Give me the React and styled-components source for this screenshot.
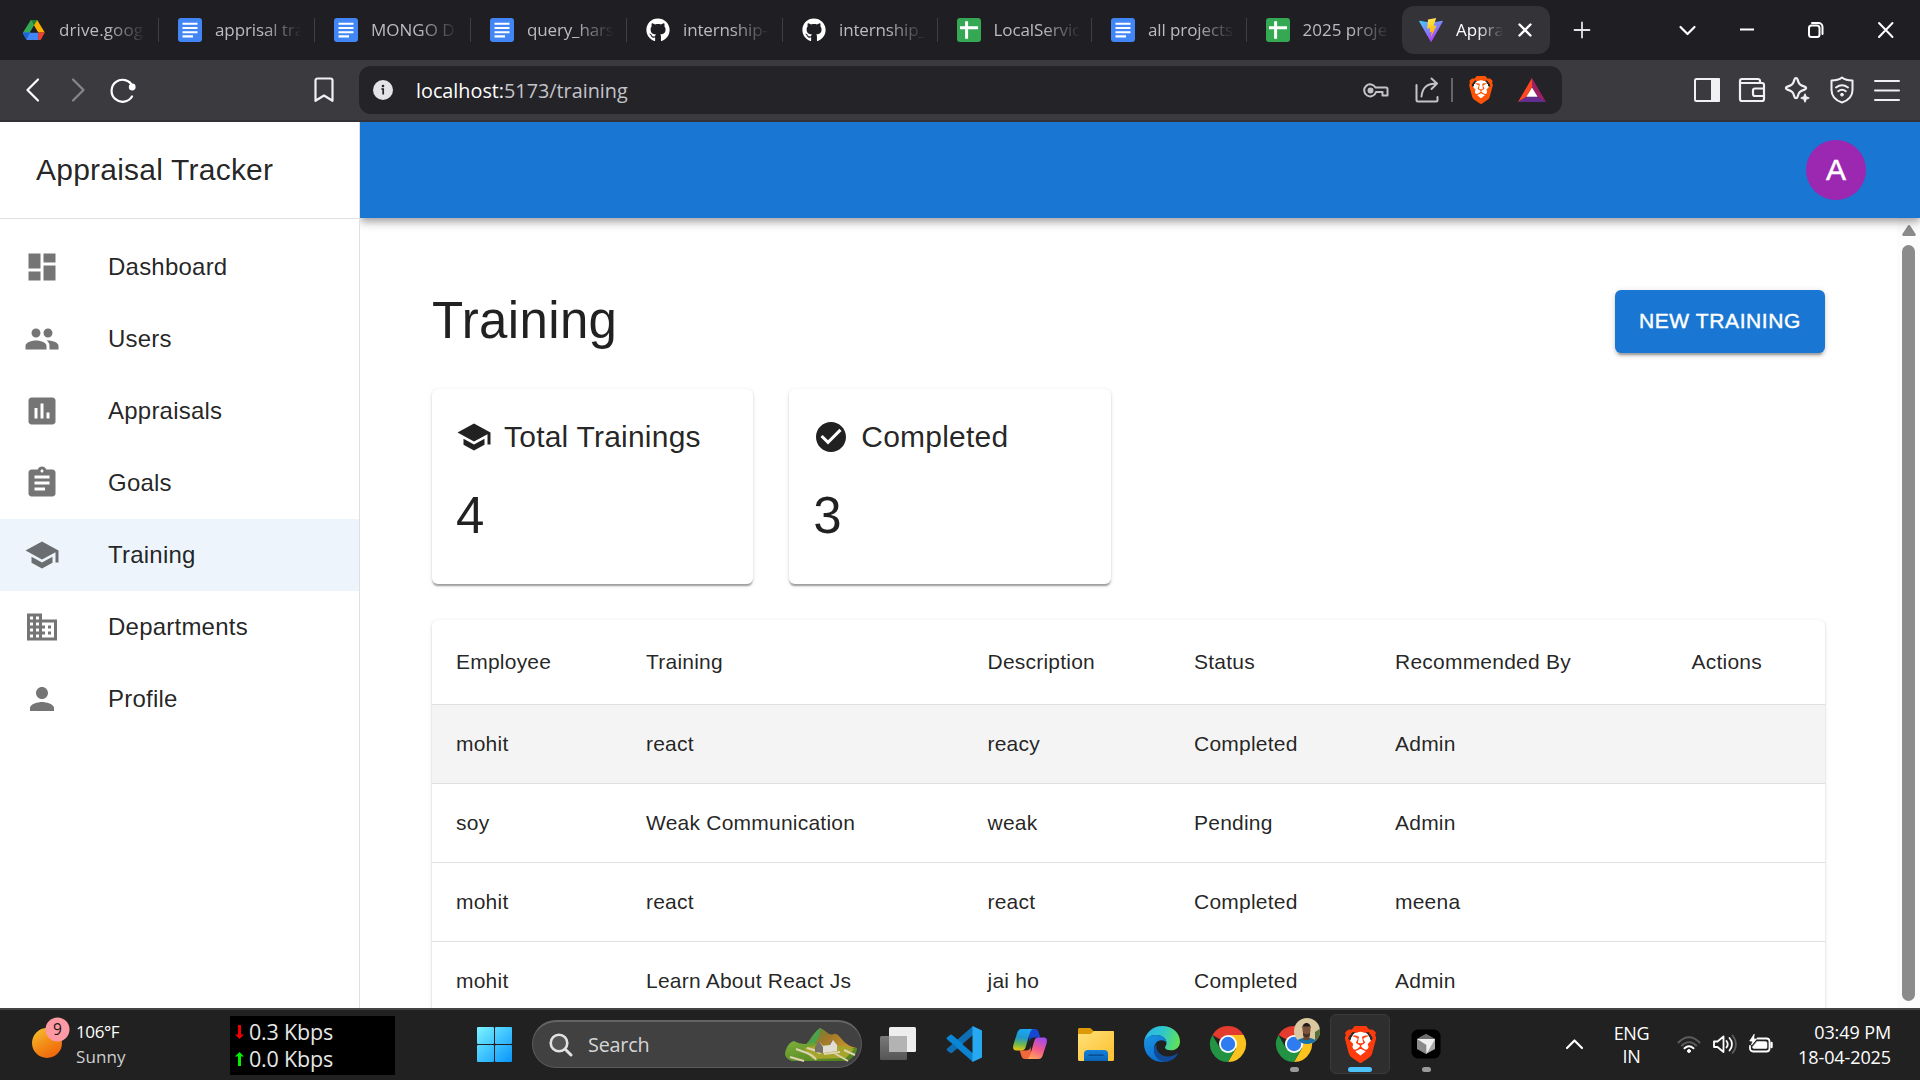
import React from 'react';
import styled, { createGlobalStyle, css } from 'styled-components';
import {
  MdDashboard,
  MdPeople,
  MdAssessment,
  MdAssignment,
  MdSchool,
  MdBusiness,
  MdPerson,
  MdCheckCircle,
} from 'react-icons/md';
import { SiBrave } from 'react-icons/si';
import { FaGithub } from 'react-icons/fa';

const GlobalStyle = createGlobalStyle`
  *, *::before, *::after { box-sizing: border-box; }
  html, body { margin: 0; padding: 0; overflow: hidden; }
  body { font-family: "Liberation Sans", Arial, sans-serif; background: #fff; }
  svg { display: block; flex: none; }
`;

const systemFont = css`
  font-family: "Open Sans", "Noto Sans", sans-serif;
`;

const Screen = styled.div`
  width: 1920px;
  height: 1080px;
  display: flex;
  flex-direction: column;
  overflow: hidden;
`;

/* ---------- Browser chrome ---------- */

const TabStrip = styled.div`
  ${systemFont}
  height: 60px;
  flex: none;
  display: flex;
  align-items: center;
  padding-left: 3px;
  background: #1f1e23;
  color: #fff;
`;

const Tab = styled.div`
  width: ${(p) => p.$width}px;
  height: 24px;
  flex: none;
  display: flex;
  align-items: center;
  gap: 13px;
  padding-left: 19px;
  border-right: 1px solid ${(p) => (p.$last ? 'transparent' : '#403f45')};
`;

const ActiveTab = styled.div`
  width: 148px;
  height: 48px;
  flex: none;
  display: flex;
  align-items: center;
  padding-left: 17px;
  border-radius: 12px;
  background: #343338;
`;

const TabTitle = styled.span`
  width: ${(p) => (p.$active ? 47 : 87)}px;
  white-space: nowrap;
  font-size: 17px;
  line-height: 24px;
  letter-spacing: ${(p) => p.$spacing || 0}px;
  color: ${(p) => (p.$active ? '#fff' : '#bcbbc0')};
  mask-image: linear-gradient(to right, #000 ${(p) => (p.$active ? 45 : 56)}%, transparent 100%);
`;

const ActiveTabTitle = styled(TabTitle)`
  margin: 0 14px 0 13px;
`;

const NewTab = styled.div`
  margin-left: 23px;
`;

const WindowControls = styled.div`
  flex: 1;
  display: flex;
  align-items: center;
  justify-content: flex-end;
  gap: 45px;
  padding-right: 22px;
`;

const TabSearch = styled.div`
  margin-right: -9px;
`;

const Toolbar = styled.div`
  ${systemFont}
  height: 62px;
  flex: none;
  display: flex;
  align-items: flex-start;
  padding-top: 6px;
  background: #3b3a3f;
  border-bottom: 2px solid #323136;
`;

const NavButtons = styled.div`
  width: 359px;
  height: 48px;
  display: flex;
  align-items: center;
  padding: 0 23px 0 24px;
`;

const NavSpacer = styled.div`
  width: ${(p) => p.$width}px;
  flex: none;
`;

const AddressBar = styled.div`
  width: 1203px;
  height: 48px;
  display: flex;
  align-items: center;
  padding: 0 16px 0 14px;
  border-radius: 12px;
  background: #242328;
`;

const Url = styled.div`
  flex: 1;
  margin-left: 23px;
  padding-top: 2px;
  font-size: 19.8px;
  line-height: 30px;
  color: #c3c3c8;
  white-space: nowrap;
`;

const Host = styled.span`
  color: #fff;
`;

const AddressActions = styled.div`
  display: flex;
  align-items: center;
`;

const ActionDivider = styled.div`
  width: 2px;
  height: 24px;
  margin: 0 14px 0 12px;
  background: #66656a;
`;

const ToolbarRight = styled.div`
  flex: 1;
  height: 48px;
  display: flex;
  align-items: center;
  justify-content: flex-end;
  gap: 17px;
  padding-right: 19px;
`;

/* ---------- Application ---------- */

const AppArea = styled.div`
  height: 886px;
  flex: none;
  display: flex;
  overflow: hidden;
  background: #fff;
  color: rgba(0, 0, 0, 0.87);
`;

const Sidebar = styled.nav`
  position: relative;
  z-index: 2;
  width: 360px;
  flex: none;
  background: #fff;
  border-right: 1px solid #e0e0e0;
`;

const Brand = styled.div`
  height: 97px;
  display: flex;
  align-items: center;
  padding: 0 36px;
  border-bottom: 1px solid #e0e0e0;
  font-size: 30px;
  line-height: 48px;
  letter-spacing: 0.225px;
  white-space: nowrap;
`;

const MenuList = styled.ul`
  list-style: none;
  margin: 0;
  padding: 12px 0;
`;

const MenuItem = styled.li`
  height: 72px;
  display: flex;
  align-items: center;
  padding: 0 24px;
  gap: 48px;
  background: ${(p) => (p.$selected ? '#edf4fc' : 'transparent')};
  font-size: 24px;
  line-height: 36px;
  letter-spacing: 0.225px;

  svg {
    width: 36px;
    height: 36px;
    color: ${(p) => (p.$selected ? '#6b6e71' : '#757575')};
  }
`;

const Main = styled.div`
  flex: 1;
  min-width: 0;
  display: flex;
  flex-direction: column;
`;

const AppBar = styled.header`
  position: relative;
  z-index: 1;
  height: 96px;
  flex: none;
  display: flex;
  align-items: center;
  justify-content: flex-end;
  padding-right: 54px;
  background: #1976d2;
  box-shadow: 0 3px 6px -1.5px rgba(0, 0, 0, 0.2), 0 6px 7.5px rgba(0, 0, 0, 0.14),
    0 1.5px 15px rgba(0, 0, 0, 0.12);
`;

const Avatar = styled.div`
  width: 60px;
  height: 60px;
  border-radius: 50%;
  display: flex;
  align-items: center;
  justify-content: center;
  background: #9c27b0;
  color: #fff;
  font-size: 30px;
  line-height: 30px;
  -webkit-text-stroke: 0.5px #fff;
`;

const ScrollArea = styled.div`
  flex: 1;
  min-height: 0;
  display: flex;
  overflow: hidden;
`;

const Content = styled.main`
  flex: 1;
  min-width: 0;
  padding: 72px 72px 0;
`;

const ScrollTrack = styled.div`
  width: 23px;
  flex: none;
  display: flex;
  flex-direction: column;
  align-items: center;
  padding: 7px 0 7px;
  gap: 9px;
  background: #fcfcfc;
`;

const ScrollThumb = styled.div`
  width: 13px;
  flex: 1;
  border-radius: 7px;
  background: #8b8b8b;
`;

const PageHeader = styled.div`
  height: 63px;
  display: flex;
  align-items: center;
  justify-content: space-between;
  margin-bottom: 36px;
`;

const PageTitle = styled.h1`
  margin: 0;
  padding-bottom: 2px;
  font-size: 51px;
  line-height: 61px;
  font-weight: 400;
  letter-spacing: 0.375px;
`;

const PrimaryButton = styled.button`
  width: 210px;
  height: 63px;
  padding: 0 0 2px;
  border: 0;
  border-radius: 6px;
  background: #1976d2;
  color: #fff;
  font-family: inherit;
  font-size: 21px;
  font-weight: 500;
  line-height: 36px;
  letter-spacing: 0.6px;
  white-space: nowrap;
  -webkit-text-stroke: 0.45px #fff;
  box-shadow: 0 4.5px 1.5px -3px rgba(0, 0, 0, 0.2), 0 3px 3px rgba(0, 0, 0, 0.14),
    0 1.5px 7.5px rgba(0, 0, 0, 0.12);
`;

const cardSurface = css`
  border-radius: 6px;
  background: #fff;
  box-shadow: 0 3px 1.5px -1.5px rgba(0, 0, 0, 0.2), 0 1.5px 1.5px rgba(0, 0, 0, 0.14),
    0 1.5px 4.5px rgba(0, 0, 0, 0.12);
`;

const StatGrid = styled.div`
  display: grid;
  grid-template-columns: repeat(4, 1fr);
  gap: 36px;
  margin-bottom: 36px;
`;

const StatCard = styled.section`
  ${cardSurface}
  height: 195px;
  padding: 24px;
`;

const StatLabel = styled.div`
  height: 48px;
  display: flex;
  align-items: center;
  gap: 12px;
  margin-bottom: 23px;
  font-size: 30px;
  line-height: 48px;
  letter-spacing: 0.225px;
  white-space: nowrap;

  svg {
    width: 36px;
    height: 36px;
  }
`;

const StatValue = styled.div`
  font-size: 51px;
  line-height: 63px;
  letter-spacing: 0.375px;
`;

const TablePaper = styled.div`
  ${cardSurface}
  overflow: hidden;
`;

const TableRow = styled.div`
  height: ${(p) => (p.$head ? 85 : 79)}px;
  display: grid;
  grid-template-columns: 190px 341.5px 206.5px 201px 296.5px 1fr;
  align-items: center;
  border-bottom: 1px solid #e0e0e0;
  background: ${(p) => (p.$hovered ? '#f4f4f4' : 'transparent')};
  font-size: 21px;
  letter-spacing: 0.225px;
`;

const Cell = styled.div`
  padding-left: 24px;
  line-height: 30px;
  white-space: nowrap;
`;

/* ---------- Taskbar ---------- */

const Taskbar = styled.footer`
  ${systemFont}
  height: 72px;
  flex: none;
  display: flex;
  align-items: flex-start;
  background: #212121;
  border-top: 2px solid #454545;
  color: #fff;
`;

const Weather = styled.div`
  width: 230px;
  height: 70px;
  display: flex;
  padding: 6px 0 0 31px;
  gap: 5px;
`;

const WeatherText = styled.div`
  padding-top: 4px;
  font-size: 17px;
  line-height: 24.5px;
  letter-spacing: -0.4px;
`;

const Muted = styled.div`
  color: #cfcfcf;
  letter-spacing: 0.1px;
`;

const NetMeter = styled.div`
  width: 165px;
  height: 59px;
  margin-top: 6px;
  padding: 2px 0 0 5px;
  background: #000;
  color: #e6e6e6;
  font-size: 21.5px;
  line-height: 27px;
  letter-spacing: -0.2px;
`;

const NetLine = styled.div`
  height: 27px;
  display: flex;
  align-items: center;
  gap: 5px;
  white-space: nowrap;
`;

const Dock = styled.div`
  display: flex;
  gap: 6px;
  margin-left: 69px;
  padding-top: 4px;
`;

const DockSlot = styled.div`
  width: 60px;
  height: 60px;
  display: flex;
  flex-direction: column;
  align-items: center;
  justify-content: space-between;
  padding: 11px 0 1px;
  border-radius: 6px;
  border: 1px solid ${(p) => (p.$active ? '#3a3a3a' : 'transparent')};
  background: ${(p) => (p.$active ? '#2e2e2e' : 'transparent')};
`;

const StartSlot = styled(DockSlot)`
  padding-top: 12px;
`;

const Indicator = styled.div`
  width: ${(p) => (p.$active ? 24 : 9)}px;
  height: 5px;
  border-radius: 3px;
  background: ${(p) => (p.$active ? '#4cc2ff' : '#9a9a9a')};
`;

const SearchBox = styled.div`
  width: 330px;
  height: 48px;
  margin: 6px 0 0 2px;
  display: flex;
  align-items: center;
  padding: 0 3px 0 16px;
  border-radius: 24px;
  border: 1px solid #5a5a5a;
  border-top: 2px solid #646464;
  background: #414141;
`;

const SearchLabel = styled.div`
  flex: 1;
  margin-left: 15px;
  font-size: 19.8px;
  line-height: 28px;
  letter-spacing: -0.2px;
  color: #d6d6d6;
`;

const Tray = styled.div`
  flex: 1;
  height: 70px;
  display: flex;
  justify-content: flex-end;
  align-items: flex-start;
  padding-right: 29px;
  white-space: nowrap;
`;

const TrayText = styled.div`
  padding-top: ${(p) => (p.$clock ? 10 : 12)}px;
  width: ${(p) => p.$width}px;
  text-align: ${(p) => (p.$clock ? 'right' : 'center')};
  font-size: 18px;
  line-height: ${(p) => (p.$clock ? 24.5 : 23)}px;
  letter-spacing: ${(p) => (p.$clock ? -0.1 : -0.3)}px;
`;

const TrayIcons = styled.div`
  height: 68px;
  display: flex;
  align-items: center;
  gap: 12px;
  margin-left: ${(p) => p.$left || 0}px;
`;

/* ---------- Icons ---------- */

const Stroke = ({ w, h, vb, color = '#f1f1f4', sw = 2, children }) => (
  <svg
    width={w}
    height={h}
    viewBox={vb || `0 0 ${w} ${h}`}
    fill="none"
    stroke={color}
    strokeWidth={sw}
    strokeLinecap="round"
    strokeLinejoin="round"
  >
    {children}
  </svg>
);

const DriveIcon = () => (
  <svg width="24" height="24" viewBox="0 0 24 24">
    <path d="M8.8 2h6.4L8 14.2 4.6 20.6 1 14.6z" fill="#34a853" />
    <path d="M8.8 2h6.4l7.6 12.6h-6.6z" fill="#fbaf00" />
    <path d="M8.8 2h6.4L12 7.6z" fill="#188038" />
    <path d="M7.8 14.6h8.6v7.4H5.6c-.8 0-1.3-.4-1.6-.9L1 15.4l-.1-.8z" fill="#4285f4" />
    <path d="M1 14.6h7L4.4 21.4z" fill="#1a66d6" />
    <path d="M16.2 14.6h6.6l-3.4 6.2c-.3.8-1 1.2-1.8 1.2h-1.4z" fill="#ea4335" />
    <path d="M12 8l3.9 6.6H8.1z" fill="#1f1e23" />
  </svg>
);

const DocsIcon = () => (
  <svg width="24" height="24" viewBox="0 0 24 24">
    <rect width="24" height="24" rx="3" fill="#4285f4" />
    <path d="M4.5 5.7h15M4.5 10h15M4.5 14.3h15M4.5 18.4h10.5" stroke="#fff" strokeWidth="2.1" />
  </svg>
);

const SheetsIcon = () => (
  <svg width="24" height="24" viewBox="0 0 24 24">
    <rect width="24" height="24" rx="3" fill="#34a853" />
    <path d="M3 9.7h18M9.6 3.2v17.6" stroke="#fff" strokeWidth="3" />
  </svg>
);

const ViteIcon = () => (
  <svg width="24" height="24" viewBox="0 0 24 24">
    <defs>
      <linearGradient id="viteBody" x1="0" y1="0" x2="0.6" y2="1">
        <stop offset="0" stopColor="#41d1ff" />
        <stop offset="1" stopColor="#bd34fe" />
      </linearGradient>
      <linearGradient id="viteBolt" x1="0" y1="0" x2="0.2" y2="1">
        <stop offset="0" stopColor="#ffea83" />
        <stop offset="0.3" stopColor="#ffdd35" />
        <stop offset="1" stopColor="#ffa800" />
      </linearGradient>
    </defs>
    <path d="M23.8 3.6L12.6 23.6a.6.6 0 01-1 0L.2 3.6c-.3-.5.1-1 .7-.9l11.1 2 11.2-2c.5-.1.9.4.6.9z" fill="url(#viteBody)" />
    <path d="M17.2 0L9 1.6L8.2 10.7L11.3 10.2L10.6 14.2L12.800 13.800L11.700 19.500L17.700 7.600L14.600 8.100L17.200 0z" fill="url(#viteBolt)" />
  </svg>
);

const InfoIcon = () => (
  <svg width="20" height="20" viewBox="0 0 20 20">
    <circle cx="10" cy="10" r="10" fill="#e4e3e8" />
    <circle cx="10" cy="6" r="1.3" fill="#242328" />
    <path d="M8.300 9h1.900v5.500" stroke="#242328" strokeWidth="1.700" fill="none" />
  </svg>
);

const BatIcon = () => (
  <svg width="28" height="24" viewBox="0 0 28 24">
    <path d="M14 0L0 24l8.600-5.200L14 9z" fill="#ff4724" />
    <path d="M14 0l14 24-8.600-5.200L14 9z" fill="#9e1f63" />
    <path d="M0 24h28l-8.600-5.500H8.600z" fill="#662d91" />
    <path d="M14 9.500l5.600 9.300H8.400z" fill="#fff" />
  </svg>
);

const BraveHolder = styled.span`
  display: flex;
  justify-content: center;
  align-items: center;
  width: ${(p) => p.$size}px;
  height: ${(p) => p.$size}px;
  background: radial-gradient(ellipse 29% 35% at 50% 48%, #fff 96%, transparent 100%);
  color: ${(p) => p.$color};
`;

const BraveIcon = ({ size, color }) => (
  <BraveHolder $size={size} $color={color}>
    <SiBrave size={size} />
  </BraveHolder>
);

const SunIcon = () => (
  <svg width="40" height="50" viewBox="0 0 40 50">
    <defs>
      <linearGradient id="sun" x1="0.1" y1="0" x2="0.7" y2="1">
        <stop offset="0" stopColor="#f6c02e" />
        <stop offset="0.55" stopColor="#f28a16" />
        <stop offset="1" stopColor="#f0640c" />
      </linearGradient>
    </defs>
    <circle cx="16" cy="27" r="15" fill="url(#sun)" />
    <circle cx="26.500" cy="13.500" r="12" fill="#ff99a4" />
    <text x="26.500" y="19" textAnchor="middle" fontSize="15.500" fontFamily="Open Sans, sans-serif" fill="#161616">9</text>
  </svg>
);

const NetArrow = ({ up }) => (
  <svg width="9" height="16" viewBox="0 0 9 16">
    <path
      d={up ? 'M4.500 1L9 5.500H6V15H3V5.500H0z' : 'M4.500 15L9 10.500H6V1H3v9.500H0z'}
      fill={up ? '#00f000' : '#f00000'}
    />
  </svg>
);

const WindowsIcon = () => (
  <svg width="35" height="35" viewBox="0 0 35 35">
    <defs>
      <linearGradient id="win" x1="0" y1="0" x2="35" y2="35" gradientUnits="userSpaceOnUse">
        <stop offset="0" stopColor="#7df4ff" />
        <stop offset="0.5" stopColor="#3fc4ff" />
        <stop offset="1" stopColor="#0a94f8" />
      </linearGradient>
    </defs>
    <g fill="url(#win)">
      <rect width="17" height="17" rx="1" />
      <rect x="18" width="17" height="17" rx="1" />
      <rect y="18" width="17" height="17" rx="1" />
      <rect x="18" y="18" width="17" height="17" rx="1" />
    </g>
  </svg>
);

const LandscapeIcon = () => (
  <svg width="74" height="36" viewBox="0 0 74 36">
    <defs>
      <linearGradient id="hillA" x1="0" y1="0" x2="1" y2="1">
        <stop offset="0" stopColor="#7cb03a" />
        <stop offset="1" stopColor="#4c7a1c" />
      </linearGradient>
      <linearGradient id="hillB" x1="0" y1="0" x2="1" y2="0.6">
        <stop offset="0" stopColor="#3f9440" />
        <stop offset="0.5" stopColor="#a0782a" />
        <stop offset="1" stopColor="#d09a2c" />
      </linearGradient>
    </defs>
    <path d="M17 20C25 18 27 7 36 1c6 2 8 8 14 6 6-2 8 12 23 14l-6 8H20z" fill="url(#hillB)" />
    <path d="M17 21c9-3 11-14 19-20 1 7-3 13-9 20z" fill="#48a44c" />
    <path d="M1 26c2-8 5-11 9-12 5 3 12 4 20 2l14 4 29 1c0 6-5 11-10 13H8c-5-2-7-4-7-8z" fill="url(#hillA)" />
    <path d="M20 21c12-4 38-4 50 1l-8 9-34 1z" fill="#a5a52c" />
    <path d="M12 22c9 3 18 6 20 11M23 21c7 2 12 3 13 6M40 27l16-2M50 26l14 8M60 23l11 5M6 30l14 4" stroke="#ded2b0" strokeWidth="2" fill="none" />
    <path d="M31 25v-5l4-6 4 6v6zM45 18l3-5 3 5z" fill="#777069" />
    <path d="M35 14l4 5 7-1 3-5 4 5v6l-14 2v-6z" fill="#e2ddd2" />
  </svg>
);

const TaskViewIcon = () => (
  <svg width="36" height="36" viewBox="0 0 36 36">
    <defs>
      <linearGradient id="tv" x1="0" y1="0" x2="0" y2="1">
        <stop offset="0" stopColor="#7a7a7a" />
        <stop offset="1" stopColor="#555" />
      </linearGradient>
    </defs>
    <rect x="9" y="1" width="27" height="25" rx="1.500" fill="#eee" />
    <rect x="0" y="10" width="27" height="24" rx="1.500" fill="url(#tv)" />
    <path d="M9 10h18v16H9z" fill="#b3b3b3" />
  </svg>
);

const CodeIcon = () => (
  <svg width="36" height="36" viewBox="0 0 36 36">
    <path d="M1 11.500l3-2.300c.700-.500 1.500-.400 2.200.1L27 27.500V36L1.200 13.500c-.700-.600-.700-1.400-.2-2z" fill="#0a84d0" />
    <path d="M1 24.500l3 2.300c.700.500 1.500.400 2.200-.1L27 9V0L1.200 22.500c-.700.600-.700 1.400-.2 2z" fill="#0f6fb5" />
    <path d="M1 11.500l3-2.300c.700-.500 1.500-.400 2.200.1L17 18l-5 4.500z" fill="#0a86d6" />
    <path d="M26.500 0L36 4.500v27L26.500 36z" fill="#27a9f2" />
  </svg>
);

const CopilotIcon = () => (
  <svg width="36" height="36" viewBox="0 0 36 36">
    <defs>
      <linearGradient id="cpA" x1="0.3" y1="0" x2="0.2" y2="1">
        <stop offset="0" stopColor="#18a8f4" />
        <stop offset="0.4" stopColor="#2298c8" />
        <stop offset="0.7" stopColor="#6cb850" />
        <stop offset="1" stopColor="#f2c80c" />
      </linearGradient>
      <linearGradient id="cpB" x1="0.7" y1="0" x2="0.3" y2="1">
        <stop offset="0" stopColor="#a24af0" />
        <stop offset="0.5" stopColor="#f0588c" />
        <stop offset="1" stopColor="#ffa45a" />
      </linearGradient>
    </defs>
    <path d="M17 3h6c2 0 3 1 3.600 3l1.700 5.500h-6c-3 0-4 1-5 4z" fill="#1746d0" />
    <path d="M19 33h-6c-2 0-3-1-3.600-3l-1.700-5.500h6c3 0 4-1 5-4z" fill="#f2683c" />
    <path d="M9.500 3H22c-2.500 0-3.500 2-4.300 4.500L14 20c-1 3.500-2 4.500-5 4.500H4.500C1 24.500.5 22 1.500 18.500L5 7.500C6 4.500 7 3 9.500 3z" fill="url(#cpA)" />
    <path d="M26.500 33H14c2.500 0 3.500-2 4.300-4.500L22 16c1-3.500 2-4.500 5-4.500h4.500c3.500 0 4 2.500 3 6L31 28.500c-1 3-2 4.500-4.500 4.500z" fill="url(#cpB)" />
  </svg>
);

const FolderIcon = () => (
  <svg width="36" height="36" viewBox="0 0 36 36">
    <defs>
      <linearGradient id="fold" x1="0" y1="0" x2="1" y2="1">
        <stop offset="0" stopColor="#ffe07a" />
        <stop offset="1" stopColor="#fcc02c" />
      </linearGradient>
      <linearGradient id="foldBase" x1="0" y1="0" x2="0" y2="1">
        <stop offset="0" stopColor="#1582dc" />
        <stop offset="1" stopColor="#0b62b4" />
      </linearGradient>
    </defs>
    <path d="M0 3.500C0 2.500.7 2 1.500 2H11c1 0 2 .4 3 1.500L15.500 5H34v8H0z" fill="#dc9a06" />
    <path d="M0 8h11c1.500 0 2.300-.4 3.200-1.500L16 5h19c.6 0 1 .4 1 1v27.500c0 .8-.5 1.500-1.500 1.500h-33C.5 35 0 34.300 0 33.500z" fill="url(#fold)" />
    <path d="M6 35v-7.500C6 25.500 7.500 24 9.500 24h17c2 0 3.500 1.500 3.500 3.500V35z" fill="url(#foldBase)" />
    <path d="M10.500 29.200h15" stroke="#0a4f94" strokeWidth="1.600" />
  </svg>
);

const EdgeIcon = () => (
  <svg width="36" height="36" viewBox="0 0 36 36">
    <defs>
      <linearGradient id="edgeTop" x1="0" y1="0.4" x2="1" y2="0.6">
        <stop offset="0" stopColor="#2ab4ec" />
        <stop offset="0.5" stopColor="#30c8c8" />
        <stop offset="1" stopColor="#62e352" />
      </linearGradient>
      <linearGradient id="edgeLeft" x1="0" y1="0" x2="0.6" y2="1">
        <stop offset="0" stopColor="#1a96e0" />
        <stop offset="1" stopColor="#0a6ed2" />
      </linearGradient>
    </defs>
    <path d="M0 17C.5 7.500 8.500 0 18 0c11 0 18 7.500 18 15.500 0 5.500-4 8.800-9 8.800-4 0-6-1.300-6-2.800 0-1 1.500-1.800 1.500-4.500C22.500 12 17.500 9 12 9 6 9 1.500 12.500 0 17z" fill="url(#edgeTop)" />
    <path d="M0 18C0 12.500 5 9 12 9c6 0 10.500 3.500 10.500 8-.8-1.800-2.500-2.800-5-2.800-4.500 0-7.500 4-7.500 9 0 6 4.500 11 11 12.500C9 37.500 0 28.500 0 18z" fill="url(#edgeLeft)" />
    <path d="M12.500 18.500c-1 6 4 12 11.500 12 4 0 7-1.500 9-3 .6-.4 1 .1.7.8C31.500 32.500 26.500 36 21 36 13 35 9.500 28.500 10 23c.2-2 1-3.500 2.500-4.500z" fill="#114a96" />
  </svg>
);

const ChromeIcon = ({ badge }) => (
  <svg width="36" height="36" viewBox="0 0 36 36" overflow="visible">
    <path d="M18 18L2.400 9A18 18 0 0133.600 9z" fill="#e33b2e" />
    <path d="M18 9h15.600A18 18 0 0118 36l7.800-13.500z" fill="#fcc31e" />
    <path d="M10.200 22.500L2.400 9A18 18 0 0018 36l7.800-13.500z" fill="#229342" />
    <circle cx="18" cy="18" r="9" fill="#fff" />
    <circle cx="18" cy="18" r="7.200" fill="#2f7cf0" />
    {badge && (
      <g>
        <clipPath id="face">
          <circle cx="31" cy="5" r="13" />
        </clipPath>
        <circle cx="31" cy="5" r="13" fill="#dcc8a0" />
        <g clipPath="url(#face)">
          <path d="M39 6l6-4v12h-6z" fill="#55703a" />
          <path d="M18 20c0-6 6-7 9-8h7c4 1 8 2 8 8z" fill="#1672a8" />
          <path d="M27.500 8h6v6h-6z" fill="#6a4630" />
          <ellipse cx="30.500" cy="4" rx="4" ry="5.500" fill="#7c543c" />
          <path d="M26.300 3c-.5-8 9-8 8.500 0l-1-2.500h-6.500z" fill="#241c1a" />
          <path d="M27 6c1 3 6 3 7 0v3c-1 3-6 3-7 0z" fill="#4a3226" />
        </g>
      </g>
    )}
  </svg>
);

const CubeIcon = () => (
  <svg width="36" height="36" viewBox="0 0 36 36">
    <rect x="3.500" y="3.500" width="29" height="29" rx="6.500" fill="#000" />
    <path d="M18 8l9 5-9 4.500L9 13z" fill="#8c8c8c" />
    <path d="M9 13l9 4.500V28l-9-5z" fill="#8a8a8a" />
    <path d="M27 13v10l-9 5V17.500z" fill="#a8a8a8" />
    <path d="M9 13h18l-8.500 15v-9z" fill="#f0f0f0" />
    <path d="M18 8l9 5H9z" fill="#6c6c6c" />
  </svg>
);

/* ---------- Data ---------- */

const tabs = [
  { icon: <DriveIcon />, title: 'drive.goog', width: 156, spacing: 0.1 },
  { icon: <DocsIcon />, title: 'apprisal tra', width: 156, spacing: -0.1 },
  { icon: <DocsIcon />, title: 'MONGO D', width: 156, spacing: 0 },
  { icon: <DocsIcon />, title: 'query_hars', width: 156, spacing: -0.15 },
  { icon: <FaGithub size={24} />, title: 'internship-', width: 156, spacing: -0.15 },
  { icon: <FaGithub size={24} />, title: 'internship_', width: 154.5, spacing: -0.15 },
  { icon: <SheetsIcon />, title: 'LocalServic', width: 154.5, spacing: -0.1 },
  { icon: <DocsIcon />, title: 'all projects', width: 154.5, spacing: -0.1 },
  { icon: <SheetsIcon />, title: '2025 proje', width: 155.5, spacing: 0 },
];

const menu = [
  ['Dashboard', MdDashboard],
  ['Users', MdPeople],
  ['Appraisals', MdAssessment],
  ['Goals', MdAssignment],
  ['Training', MdSchool],
  ['Departments', MdBusiness],
  ['Profile', MdPerson],
];

const stats = [
  ['Total Trainings', 4, MdSchool],
  ['Completed', 3, MdCheckCircle],
];

const columns = ['Employee', 'Training', 'Description', 'Status', 'Recommended By', 'Actions'];

const rows = [
  ['mohit', 'react', 'reacy', 'Completed', 'Admin', ''],
  ['soy', 'Weak Communication', 'weak', 'Pending', 'Admin', ''],
  ['mohit', 'react', 'react', 'Completed', 'meena', ''],
  ['mohit', 'Learn About React Js', 'jai ho', 'Completed', 'Admin', ''],
];

const dockApps = [
  { name: 'taskview', icon: <TaskViewIcon /> },
  { name: 'code', icon: <CodeIcon /> },
  { name: 'copilot', icon: <CopilotIcon /> },
  { name: 'explorer', icon: <FolderIcon /> },
  { name: 'edge', icon: <EdgeIcon /> },
  { name: 'chrome', icon: <ChromeIcon /> },
  { name: 'chrome-profile', icon: <ChromeIcon badge />, running: true },
  { name: 'brave', icon: <BraveIcon size={37} color="#ff3a0c" />, running: true, active: true },
  { name: 'cursor', icon: <CubeIcon />, running: true },
];

/* ---------- Sections ---------- */

const BrowserTabs = () => (
  <TabStrip>
    {tabs.map((t, i) => (
      <Tab key={i} $width={t.width} $last={i === tabs.length - 1}>
        {t.icon}
        <TabTitle $spacing={t.spacing}>{t.title}</TabTitle>
      </Tab>
    ))}
    <ActiveTab>
      <ViteIcon />
      <ActiveTabTitle $active>Appra</ActiveTabTitle>
      <Stroke w={16} h={16} color="#fff" sw={2.4}>
        <path d="M2.500 2.500l11 11M13.500 2.500l-11 11" />
      </Stroke>
    </ActiveTab>
    <NewTab>
      <Stroke w={18} h={18} color="#e4e3e8" sw={1.800}>
        <path d="M9 1.500v15M1.500 9h15" />
      </Stroke>
    </NewTab>
    <WindowControls>
      <TabSearch>
        <Stroke w={24} h={18} color="#fff" sw={2.200}>
          <path d="M4.500 6l7 7 7-7" />
        </Stroke>
      </TabSearch>
      <Stroke w={24} h={18} color="#fff" sw={2}>
        <path d="M4 8.500h14" strokeLinecap="butt" />
      </Stroke>
      <Stroke w={24} h={18} color="#fff" sw={2}>
        <rect x="4" y="4.500" width="10.500" height="11.500" rx="2.500" />
        <path d="M7 2h6.500a4 4 0 014 4v7" />
      </Stroke>
      <Stroke w={24} h={18} color="#fff" sw={2}>
        <path d="M5 2l13.500 14M18.500 2L5 16" />
      </Stroke>
    </WindowControls>
  </TabStrip>
);

const BrowserToolbar = () => (
  <Toolbar>
    <NavButtons>
      <Stroke w={18} h={26} color="#fff" sw={2.200}>
        <path d="M14 2.500L3.500 13 14 23.500" />
      </Stroke>
      <NavSpacer $width={27} />
      <Stroke w={18} h={26} color="#87868b" sw={2.200}>
        <path d="M4 2.500L14.500 13 4 23.500" />
      </Stroke>
      <NavSpacer $width={22} />
      <Stroke w={28} h={26} color="#fff" sw={2.200}>
        <path d="M23 19.500A11 11 0 1 1 23.500 9" />
        <circle cx="23.200" cy="10" r="2.300" fill="#fff" />
      </Stroke>
      <NavSpacer $width={177} />
      <Stroke w={20} h={26} color="#f1f1f4" sw={2.200}>
        <path d="M1.500 3.500a2 2 0 012-2h13a2 2 0 012 2v20.300L10 18.500l-8.500 5.300z" />
      </Stroke>
    </NavButtons>
    <AddressBar>
      <InfoIcon />
      <Url>
        <Host>localhost:</Host>5173/training
      </Url>
      <AddressActions>
        <Stroke w={26} h={20} color="#c3c3c8" sw={2}>
          <path d="M12.500 7.500h10.500a1.500 1.500 0 011.500 1.500v6.500h-5v-3.500h-6.500A6 6 0 1 1 12.500 7.500z" />
          <circle cx="7.500" cy="10.500" r="2" fill="#c3c3c8" />
        </Stroke>
        <NavSpacer $width={26} />
        <Stroke w={24} h={26} color="#c3c3c8" sw={2}>
          <path d="M1.500 8v15a1.500 1.500 0 001.500 1.500h18a1.500 1.500 0 001.500-1.500v-3" />
          <path d="M6.500 19.500C7.500 10 12 6.500 22 6.500M16.500 1.500l5.500 5-5.500 5.500" />
        </Stroke>
        <ActionDivider />
        <BraveIcon size={28} color="#fb5406" />
        <NavSpacer $width={23} />
        <BatIcon />
      </AddressActions>
    </AddressBar>
    <ToolbarRight>
      <Stroke w={28} h={26} color="#f1f1f4" sw={2}>
        <rect x="2" y="2" width="24" height="22" rx="1.500" />
        <path d="M19 2h7v22h-7z" fill="#f1f1f4" />
      </Stroke>
      <Stroke w={28} h={26} color="#f1f1f4" sw={2.200}>
        <path d="M22 6V4a2 2 0 00-2-2H4a2 2 0 00-2 2v18a2 2 0 002 2h20a2 2 0 002-2V8a2 2 0 00-2-2H2M26 11.500h-9a2 2 0 00-2 2v3.500a2 2 0 002 2h9" />
      </Stroke>
      <Stroke w={28} h={28} color="#f1f1f4" sw={2.200}>
        <path d="M13 2c.8 0 1.300.6 1.600 1.600 1.200 4.500 2.300 5.600 7 7 1 .3 1.500.8 1.500 1.500s-.5 1.200-1.500 1.500c-4.700 1.400-5.800 2.500-7 7-.3 1-.8 1.600-1.600 1.600s-1.300-.6-1.600-1.600c-1.200-4.500-2.300-5.600-7-7-1-.3-1.500-.8-1.500-1.500s.5-1.200 1.500-1.500c4.700-1.400 5.800-2.500 7-7C11.700 2.600 12.200 2 13 2z" />
        <path d="M22 18l1.100 2.900L26 22l-2.900 1.100L22 26l-1.100-2.900L18 22l2.900-1.100z" fill="#f1f1f4" strokeWidth="1.200" />
      </Stroke>
      <Stroke w={28} h={28} color="#f1f1f4" sw={2}>
        <path d="M14 1.500c2.500 2 6 3 10.500 3V14c0 6.500-4.500 10.500-10.500 12.500C8 24.500 3.500 20.500 3.500 14V4.500c4.500 0 8-1 10.500-3z" />
        <path d="M8 11.500c4-3 8-3 12 0M10.200 15.200c2.500-2 5.100-2 7.600 0" />
        <circle cx="14" cy="18.700" r="1.400" fill="#f1f1f4" strokeWidth="1" />
      </Stroke>
      <Stroke w={28} h={24} color="#f1f1f4" sw={2}>
        <path d="M2 3h24M2 12.500h24M2 22h24" />
      </Stroke>
    </ToolbarRight>
  </Toolbar>
);

const TrainingPage = () => (
  <Content>
    <PageHeader>
      <PageTitle>Training</PageTitle>
      <PrimaryButton>NEW TRAINING</PrimaryButton>
    </PageHeader>
    <StatGrid>
      {stats.map(([label, value, Icon]) => (
        <StatCard key={label}>
          <StatLabel>
            <Icon />
            {label}
          </StatLabel>
          <StatValue>{value}</StatValue>
        </StatCard>
      ))}
    </StatGrid>
    <TablePaper>
      <TableRow $head>
        {columns.map((c) => (
          <Cell key={c}>{c}</Cell>
        ))}
      </TableRow>
      {rows.map((r, i) => (
        <TableRow key={i} $hovered={i === 0}>
          {r.map((v, j) => (
            <Cell key={j}>{v}</Cell>
          ))}
        </TableRow>
      ))}
    </TablePaper>
  </Content>
);

const SystemTray = () => (
  <Tray>
    <TrayIcons>
      <Stroke w={20} h={14} color="#fff" sw={2.200}>
        <path d="M3 11l7.500-7.500L18 11" />
      </Stroke>
      <NavSpacer $width={0} />
    </TrayIcons>
    <TrayText $width={71}>
      <div>ENG</div>
      <div>IN</div>
    </TrayText>
    <TrayIcons $left={10}>
      <Stroke w={24} h={20} color="#fff" sw={2}>
        <path d="M1.500 8.500C8 1.500 16 1.500 22.500 8.500" stroke="#5c5c5c" />
        <path d="M4.800 11.500c4.500-4.500 9.900-4.500 14.400 0" stroke="#5c5c5c" />
        <path d="M7.500 14.300c3-2.700 6-2.700 9 0" />
        <circle cx="12" cy="17" r="1.500" fill="#fff" strokeWidth="1" />
      </Stroke>
      <Stroke w={24} h={20} color="#fff" sw={1.800}>
        <path d="M1 7.500v5.500h3.500l6 5V2.500l-6 5z" />
        <path d="M13.500 7c1.500 2 1.500 4.500 0 6.500M16.500 4c3.300 3.500 3.300 9 0 12.500" />
        <path d="M19.500 1.500c4.500 5 4.500 12.500 0 17.500" stroke="#5c5c5c" />
      </Stroke>
      <Stroke w={24} h={20} color="#fff" sw={1.800}>
        <path d="M8.500 4.500h9a3 3 0 013 3v7a3 3 0 01-3 3H4a3 3 0 01-3-3V12" />
        <path d="M8 7.500h8.500a1.500 1.500 0 011.500 1.500v4.500a1 1 0 01-1 1H5a1.500 1.500 0 01-1.500-1.500z" fill="#fff" strokeWidth="0.500" />
        <path d="M22.500 9v4" strokeWidth="2.400" />
        <path d="M5 .5L.8 7h3L2.500 11 7.500 5H5z" fill="#fff" strokeWidth="0.800" />
      </Stroke>
    </TrayIcons>
    <TrayText $clock $width={118}>
      <div>03:49 PM</div>
      <div>18-04-2025</div>
    </TrayText>
  </Tray>
);

export default function App() {
  return (
    <Screen>
      <GlobalStyle />
      <BrowserTabs />
      <BrowserToolbar />
      <AppArea>
        <Sidebar>
          <Brand>Appraisal Tracker</Brand>
          <MenuList>
            {menu.map(([label, Icon]) => (
              <MenuItem key={label} $selected={label === 'Training'}>
                <Icon />
                {label}
              </MenuItem>
            ))}
          </MenuList>
        </Sidebar>
        <Main>
          <AppBar>
            <Avatar>A</Avatar>
          </AppBar>
          <ScrollArea>
            <TrainingPage />
            <ScrollTrack>
              <svg width="14" height="11" viewBox="0 0 14 11">
                <path d="M5.800.8a1.500 1.500 0 012.400 0l5.400 8.200c.5.900.1 2-1 2H1.400c-1.100 0-1.500-1.100-1-2z" fill="#8b8b8b" />
              </svg>
              <ScrollThumb />
            </ScrollTrack>
          </ScrollArea>
        </Main>
      </AppArea>
      <Taskbar>
        <Weather>
          <SunIcon />
          <WeatherText>
            106°F
            <Muted>Sunny</Muted>
          </WeatherText>
        </Weather>
        <NetMeter>
          <NetLine>
            <NetArrow />
            0.3 Kbps
          </NetLine>
          <NetLine>
            <NetArrow up />
            0.0 Kbps
          </NetLine>
        </NetMeter>
        <Dock>
          <StartSlot>
            <WindowsIcon />
          </StartSlot>
          <SearchBox>
            <Stroke w={24} h={24} color="#e2e2e2" sw={2.600}>
              <circle cx="10" cy="10" r="8.300" fill="#555" />
              <path d="M16.500 16.500l5.500 5.500" strokeWidth="3" />
            </Stroke>
            <SearchLabel>Search</SearchLabel>
            <LandscapeIcon />
          </SearchBox>
          {dockApps.map((a) => (
            <DockSlot key={a.name} $active={a.active}>
              {a.icon}
              {a.running && <Indicator $active={a.active} />}
            </DockSlot>
          ))}
        </Dock>
        <SystemTray />
      </Taskbar>
    </Screen>
  );
}
